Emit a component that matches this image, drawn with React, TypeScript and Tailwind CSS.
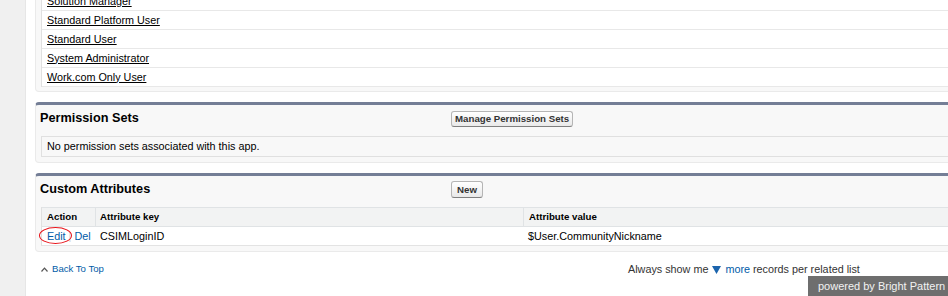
const profiles = [
  'Solution Manager',
  'Standard Platform User',
  'Standard User',
  'System Administrator',
  'Work.com Only User',
];

const SfButton: React.FC<{ label: string; wide?: boolean }> = ({ label, wide }) => (
  <button
    className={
      wide
        ? 'block h-[17px] px-[5px] rounded-[3px] border border-[#b5b5b5] border-b-[#7f7f7f] bg-linear-to-b from-[#ffffff] to-[#e9e9e9] text-[#333] text-[9.7px] font-bold leading-[15px]'
        : 'block h-[16px] px-[3px] rounded-[3px] border border-[#b5b5b5] border-b-[#7f7f7f] bg-linear-to-b from-[#ffffff] to-[#e9e9e9] text-[#333] text-[9.7px] font-bold leading-[14px]'
    }
  >
    {label}
  </button>
);

const PanelHeader: React.FC<{ title: string; button: string; wide?: boolean }> = ({ title, button, wide }) => (
  <div className="h-[31px] flex items-start pt-[5px] pl-[4px]">
    <h3 className="w-[411px] shrink-0 text-[12.7px] leading-[16px] font-bold text-black">{title}</h3>
    <div className={wide ? 'flex' : 'flex pt-[1px]'}>
      <SfButton label={button} wide={wide} />
    </div>
  </div>
);

export default function App() {
  return (
    <div className="relative w-[948px] h-[296px] overflow-hidden bg-white flex font-['Liberation_Sans',Arial,sans-serif]">
      <div className="w-[26px] shrink-0 bg-[#f0f0f0] border-r border-[#e6e6e6]" />
      <div className="w-[960px] shrink-0 pl-[9px]">
        {/* assigned profiles (scrolled) */}
        <div className="-mt-[8px] bg-[#f8f8f8] border-x border-b border-[#eaeaea] rounded-b-[4px] pl-[5px] pb-[4px]">
          <div className="bg-white border-l border-[#e0e0e0]">
            {profiles.map((p) => (
              <div key={p} className="h-[19px] border-b border-[#e8e8e8] flex items-center pl-[5px]">
                <a className="text-[10.8px] text-black underline leading-[13px]">{p}</a>
              </div>
            ))}
          </div>
        </div>

        {/* permission sets */}
        <div className="mt-[10px] bg-[#f8f8f8] border border-[#eaeaea] border-t-[3px] border-t-[#747e96] rounded-[4px] pb-[5px]">
          <PanelHeader title="Permission Sets" button="Manage Permission Sets" />
          <div className="ml-[5px] h-[21px] border-y border-l border-[#e0e0e0] flex items-center pl-[5px]">
            <span className="text-[10.8px] text-black">No permission sets associated with this app.</span>
          </div>
        </div>

        {/* custom attributes */}
        <div className="mt-[10px] bg-[#f8f8f8] border border-[#eaeaea] border-t-[3px] border-t-[#747e96] rounded-[4px] pb-[5px]">
          <PanelHeader title="Custom Attributes" button="New" wide />
          <div className="ml-[5px] border-l border-[#e0e0e0] text-black">
            <div className="grid grid-cols-[54px_428px_1fr] h-[20px] bg-[#f2f3f3] border-y border-[#e0e3e5] text-[9.7px] font-bold">
              <div className="border-r border-[#e0e3e5] pl-[5px] flex items-center">Action</div>
              <div className="border-r border-[#e0e3e5] pl-[4px] flex items-center">Attribute key</div>
              <div className="pl-[5px] flex items-center">Attribute value</div>
            </div>
            <div className="grid grid-cols-[54px_428px_1fr] h-[19px] bg-white border-b border-[#e3e3e3] text-[10.8px]">
              <div className="relative pl-[5px] flex items-center whitespace-nowrap">
                <a className="text-[#015ba7]">Edit</a>
                <span className="text-[#d0d0d0] mx-[3px]">|</span>
                <a className="text-[#015ba7]">Del</a>
                <span className="absolute left-[-3px] top-[0px] w-[33px] h-[17px] rounded-[50%] border border-[#e8141b]" />
              </div>
              <div className="pl-[4px] flex items-center">CSIMLoginID</div>
              <div className="pl-[4px] flex items-center">$User.CommunityNickname</div>
            </div>
          </div>
        </div>

        {/* footer */}
        <div className="mt-[11px] flex items-center h-[13px] pl-[6px]">
          <div className="w-[587px] shrink-0 flex items-center gap-[4px] text-[9.6px] text-[#015ba7]">
            <svg width="7" height="5" viewBox="0 0 7 5" className="text-[#555]">
              <path d="M0.5 4.5 L3.5 1.2 L6.5 4.5" fill="none" stroke="currentColor" strokeWidth="1.2" />
            </svg>
            <a>Back To Top</a>
          </div>
          <div className="flex items-center text-[10.8px] text-[#333] whitespace-nowrap">
            <span>Always show me</span>
            <svg width="9" height="8" viewBox="0 0 9 8" className="mx-[4px]">
              <polygon points="0,0 9,0 4.5,8" fill="#1b64ad" />
            </svg>
            <a className="text-[#015ba7]">more</a>
            <span className="ml-[3px]">records per related list</span>
          </div>
        </div>
      </div>

      <div className="absolute right-0 bottom-0 w-[140px] h-[20px] bg-[#6e6e6e] text-[#f2f2f2] text-[11px] flex items-center pl-[10px]">
        powered by Bright Pattern
      </div>
    </div>
  );
}
